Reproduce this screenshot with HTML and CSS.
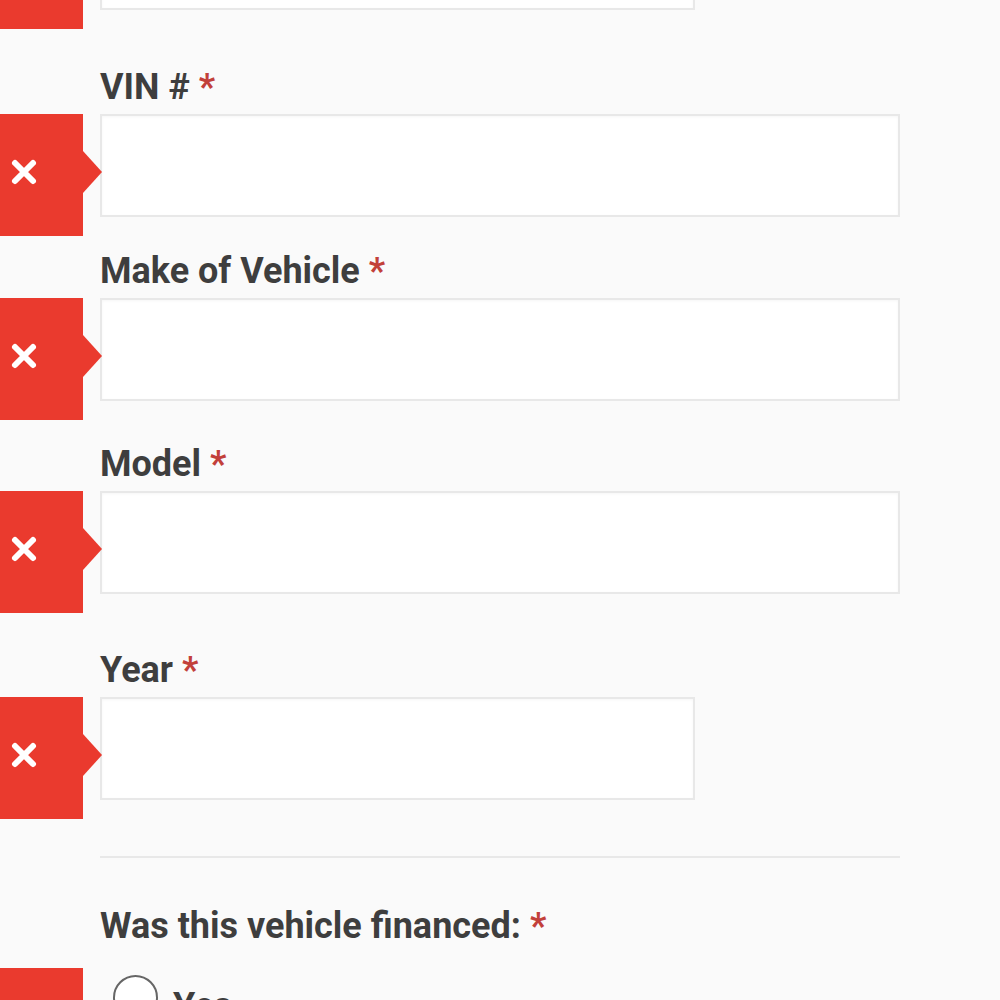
FILE: index.html
```html
<!DOCTYPE html>
<html lang="en">
<head>
<meta charset="utf-8">
<title>Vehicle form</title>
<link rel="stylesheet" href="styles.css">
</head>
<body>
<form class="form">
  <div class="field field-first">
    <div class="row">
      <div class="marker"><svg class="x" viewBox="0 0 28 28" width="28" height="28"><path d="M5 5 L23 23 M23 5 L5 23" stroke="#fff" stroke-width="6" stroke-linecap="round" fill="none"/></svg></div>
      <div class="input half"></div>
    </div>
  </div>

  <div class="field field-vin">
    <label class="label">VIN # <span class="req">*</span></label>
    <div class="row">
      <div class="marker"><svg class="x" viewBox="0 0 28 28" width="28" height="28"><path d="M5 5 L23 23 M23 5 L5 23" stroke="#fff" stroke-width="6" stroke-linecap="round" fill="none"/></svg></div>
      <div class="input"></div>
    </div>
  </div>

  <div class="field field-make">
    <label class="label">Make of Vehicle <span class="req">*</span></label>
    <div class="row">
      <div class="marker"><svg class="x" viewBox="0 0 28 28" width="28" height="28"><path d="M5 5 L23 23 M23 5 L5 23" stroke="#fff" stroke-width="6" stroke-linecap="round" fill="none"/></svg></div>
      <div class="input"></div>
    </div>
  </div>

  <div class="field field-model">
    <label class="label">Model <span class="req">*</span></label>
    <div class="row">
      <div class="marker"><svg class="x" viewBox="0 0 28 28" width="28" height="28"><path d="M5 5 L23 23 M23 5 L5 23" stroke="#fff" stroke-width="6" stroke-linecap="round" fill="none"/></svg></div>
      <div class="input"></div>
    </div>
  </div>

  <div class="field field-year">
    <label class="label">Year <span class="req">*</span></label>
    <div class="row">
      <div class="marker"><svg class="x" viewBox="0 0 28 28" width="28" height="28"><path d="M5 5 L23 23 M23 5 L5 23" stroke="#fff" stroke-width="6" stroke-linecap="round" fill="none"/></svg></div>
      <div class="input half"></div>
    </div>
  </div>

  <div class="divider"></div>

  <div class="field field-financed">
    <label class="label label-q">Was this vehicle financed: <span class="req">*</span></label>
    <div class="row">
      <div class="marker"></div>
      <div class="choices">
        <div class="choice"><span class="radio"></span><span class="choice-text">Yes</span></div>
      </div>
    </div>
  </div>
</form>
</body>
</html>
```

FILE: styles.css
```css
html, body {
  margin: 0;
  padding: 0;
  background: #fafafa;
}
body {
  font-family: Roboto, "Liberation Sans", Arial, sans-serif;
  color: #3f3f3f;
  height: 1000px;
  overflow: hidden;
}
.form {
  margin-top: -93px;
  display: flex;
  flex-direction: column;
}
.label {
  display: block;
  margin: 0 0 5px 100px;
  font-size: 36px;
  line-height: 44px;
  font-weight: 700;
  color: #3e3e3e;
}
.req {
  color: #c2403a;
}
.row {
  display: flex;
  align-items: flex-start;
}
.marker {
  flex: none;
  width: 83px;
  height: 122px;
  margin-bottom: -19px;
  background: #ea3a2e;
  position: relative;
  box-sizing: border-box;
  padding: 44px 0 0 10px;
}
.marker::after {
  content: "";
  position: absolute;
  left: 83px;
  top: 37px;
  border-left: 19px solid #ea3a2e;
  border-top: 21px solid transparent;
  border-bottom: 21px solid transparent;
}
.x {
  display: block;
}
.input {
  margin-left: 17px;
  width: 800px;
  height: 103px;
  box-sizing: border-box;
  border: 2px solid #e8e8e8;
  background: #fff;
  box-shadow: inset 0 1px 3px rgba(0, 0, 0, 0.04);
}
.input.half {
  width: 595px;
}
.field-vin { margin-top: 55px; }
.field-make { margin-top: 32px; }
.field-model { margin-top: 41px; }
.field-year { margin-top: 54px; }
.divider {
  margin: 56px 0 0 100px;
  width: 800px;
  height: 2px;
  background: #e8e8e8;
}
.field-financed { margin-top: 46px; }
.label-q { margin-bottom: 20px; }
.choices {
  margin-left: 30px;
  padding-top: 7px;
}
.choice {
  display: flex;
  align-items: flex-start;
  gap: 15px;
}
.radio {
  flex: none;
  width: 45px;
  height: 45px;
  box-sizing: border-box;
  border: 2px solid #666;
  border-radius: 50%;
  background: #fff;
}
.choice-text {
  margin-top: 9px;
  font-size: 36px;
  line-height: 44px;
  font-weight: 700;
  color: #3e3e3e;
}
```
